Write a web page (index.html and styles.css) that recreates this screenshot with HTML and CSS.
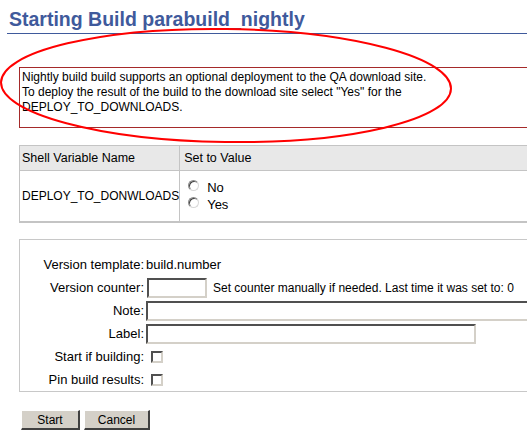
FILE: index.html
```html
<!DOCTYPE html>
<html>
<head>
<meta charset="utf-8">
<link rel="stylesheet" href="styles.css">
</head>
<body>
<div class="page">
  <h1 class="title">Starting Build parabuild_nightly</h1>

  <div class="notice">Nightly build build supports an optional deployment to the QA download site.<br>To deploy the result of the build to the download site select "Yes" for the<br>DEPLOY_TO_DOWNLOADS.</div>

  <table class="vars">
    <tr class="head">
      <th class="c1">Shell Variable Name</th>
      <th class="c2">Set to Value</th>
    </tr>
    <tr class="row">
      <td class="c1">DEPLOY_TO_DONWLOADS</td>
      <td class="c2">
        <label class="opt"><input type="radio" name="dep" class="radio"><span>No</span></label>
        <label class="opt"><input type="radio" name="dep" class="radio"><span>Yes</span></label>
      </td>
    </tr>
  </table>

  <div class="form">
    <div class="frow"><span class="lbl">Version template:</span><span class="val">build.number</span></div>
    <div class="frow"><span class="lbl">Version counter:</span><span class="val"><input type="text" class="inp counter"><span class="hint">Set counter manually if needed. Last time it was set to: 0</span></span></div>
    <div class="frow"><span class="lbl">Note:</span><span class="val"><input type="text" class="inp note"></span></div>
    <div class="frow"><span class="lbl">Label:</span><span class="val"><input type="text" class="inp labelin"></span></div>
    <div class="frow"><span class="lbl">Start if building:</span><span class="val"><input type="checkbox" class="check"></span></div>
    <div class="frow"><span class="lbl">Pin build results:</span><span class="val"><input type="checkbox" class="check"></span></div>
  </div>

  <div class="buttons">
    <button class="btn start">Start</button>
    <button class="btn cancel">Cancel</button>
  </div>

  <svg class="annot" width="527" height="160" viewBox="0 0 527 160">
    <ellipse cx="226" cy="85.5" rx="225" ry="56.5" fill="none" stroke="#ff0000" stroke-width="2" transform="rotate(0.8 226 85.5)"/>
  </svg>
</div>
</body>
</html>
```

FILE: styles.css
```css
html, body {
  margin: 0;
  padding: 0;
  background: #ffffff;
  overflow: hidden;
}
body {
  font-family: "Liberation Sans", Arial, sans-serif;
  font-size: 12px;
  color: #000000;
}
.page {
  position: relative;
  width: 600px;
  padding: 8px 0 0 19px;
}
.title {
  margin: 0 0 0 -12px;
  padding: 0 0 3px 2px;
  font-size: 19.5px;
  line-height: 22px;
  font-weight: bold;
  color: #3f5a9c;
  border-bottom: 1px solid #3f5a9c;
}
.notice {
  margin-top: 33px;
  border: 1px solid #a52a2a;
  padding: 2px 3px 12px 2px;
  line-height: 15px;
  height: 45px;
  color: #000;
}
.vars {
  margin-top: 17px;
  width: 100%;
  border-collapse: collapse;
  border-left: 1px solid #c4c4c4;
  border-top: 1px solid #c4c4c4;
  border-bottom: 2px solid #c4c4c4;
}
.vars th, .vars td {
  padding: 0 0 0 2px;
  text-align: left;
  font-weight: normal;
  vertical-align: middle;
}
.vars .head th {
  background: #e8e8e8;
  height: 24px;
  font-size: 12.5px;
  border-bottom: 1px solid #c4c4c4;
}
.vars .c1 {
  width: 157px;
  border-right: 1px solid #c4c4c4;
}
.vars .head .c2 { padding-left: 4px; }
.vars .row .c2 { padding: 8px 0 8px 8px; }
.opt {
  display: flex;
  align-items: center;
  height: 17px;
  font-size: 13px;
}
.radio {
  appearance: none;
  -webkit-appearance: none;
  width: 11px;
  height: 11px;
  margin: -5px 8px 0 0;
  border-radius: 50%;
  border: 1px solid #8a8a8a;
  border-right-color: #d8d8d8;
  border-bottom-color: #d8d8d8;
  background: #ffffff;
  box-shadow: inset 1px 1px 0 #444;
}
.form {
  margin-top: 16px;
  border: 1px solid #c8c8c8;
  padding: 13px 0 0 0;
  font-size: 13px;
}
.frow {
  display: flex;
  align-items: center;
  height: 23px;
}
.lbl {
  width: 124px;
  text-align: right;
  flex: none;
}
.val {
  display: flex;
  align-items: center;
  padding-left: 2px;
}
.inp {
  height: 20px;
  box-sizing: border-box;
  margin: 0;
  padding: 1px 2px;
  font-family: "Liberation Sans", Arial, sans-serif;
  font-size: 12px;
  background: #fff;
  border-style: solid;
  border-width: 2px;
  border-color: #505050 #d4d0c8 #d4d0c8 #505050;
  outline: none;
}
.counter {
  width: 60px;
  margin-left: 1px;
}
.hint { margin-left: 6px; font-size: 12px; }
.note { width: 420px; }
.labelin { width: 330px; }
.check {
  appearance: none;
  -webkit-appearance: none;
  width: 12px;
  height: 12px;
  margin: 0 0 0 5px;
  box-sizing: border-box;
  border-style: solid;
  border-width: 2px;
  border-color: #505050 #d4d0c8 #d4d0c8 #505050;
  background: #fff;
}
.buttons {
  display: flex;
  gap: 4px;
  margin: 18px 0 0 2px;
}
.btn {
  height: 20px;
  box-sizing: border-box;
  padding: 0;
  background: #d4d0c8;
  font-family: "Liberation Sans", Arial, sans-serif;
  font-size: 12px;
  color: #000;
  border-style: solid;
  border-width: 1px 2px 2px 1px;
  border-color: #ffffff #404040 #404040 #ffffff;
}
.start { width: 59px; }
.cancel { width: 66px; }
.annot {
  position: absolute;
  left: 0;
  top: 0;
  pointer-events: none;
}
```
